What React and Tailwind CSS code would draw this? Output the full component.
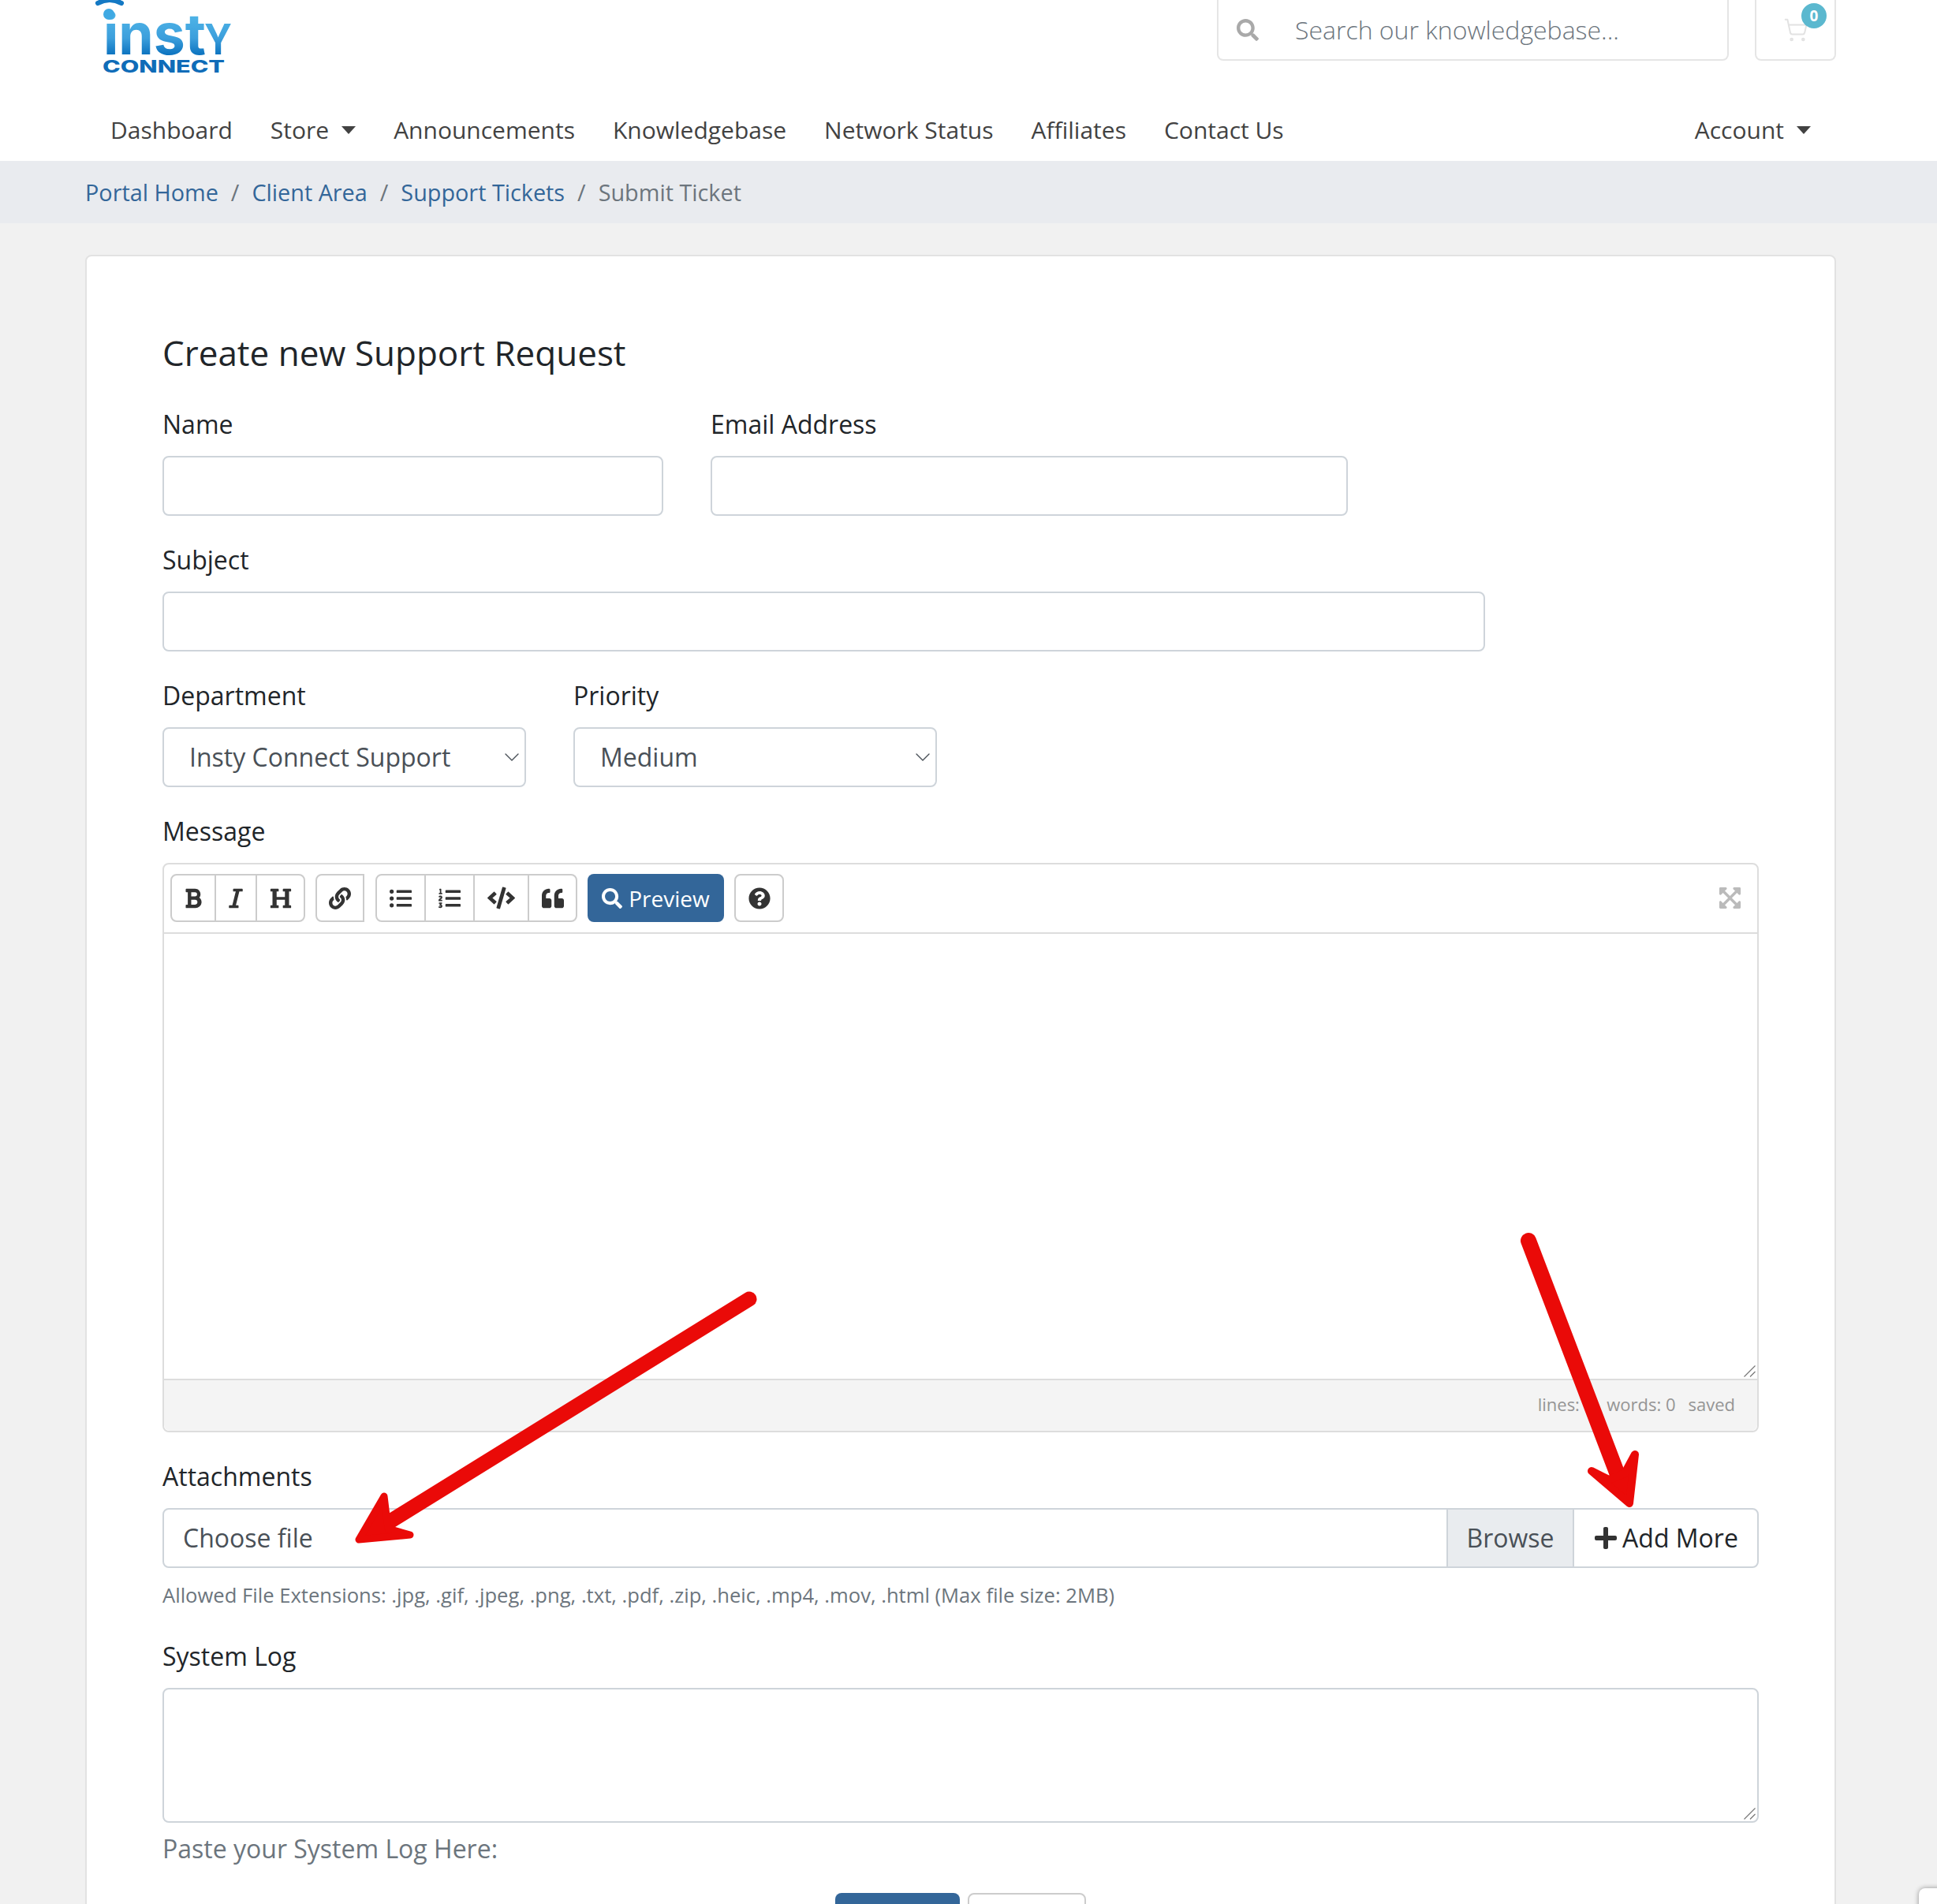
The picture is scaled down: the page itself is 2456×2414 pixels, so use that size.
import React from 'react';
import { ShoppingCart, ChevronDown } from 'lucide-react';
import {
  FaBold, FaItalic, FaHeading, FaLink, FaListUl, FaListOl, FaCode, FaQuoteLeft,
  FaSearch, FaQuestionCircle, FaExpandArrowsAlt, FaPlus,
} from 'react-icons/fa';

const navLinks = ['Dashboard', 'Store', 'Announcements', 'Knowledgebase', 'Network Status', 'Affiliates', 'Contact Us'];

function Caret() {
  return <span className="ml-[16px] inline-block border-x-[9px] border-t-[10px] border-x-transparent border-t-[#424242]" />;
}

function Logo() {
  return (
    <svg width="190" height="100" viewBox="120 0 190 100" className="block">
      <defs>
        <linearGradient id="instyFill" gradientUnits="userSpaceOnUse" x1="0" y1="22" x2="0" y2="70">
          <stop offset="0" stopColor="#4db2e6" />
          <stop offset="0.55" stopColor="#3c9fdc" />
          <stop offset="1" stopColor="#0b72bf" />
        </linearGradient>
      </defs>
      <path d="M124 4 Q139 -4 154 4" fill="none" stroke="#1479c4" strokeWidth="6" strokeLinecap="round" />
      <text x="131" y="69" fontFamily="Inter, sans-serif" fontWeight="700" fontSize="72" textLength="130" lengthAdjust="spacingAndGlyphs" fill="url(#instyFill)">inst</text>
      <text x="259" y="69" fontFamily="Inter, sans-serif" fontWeight="700" fontSize="54" textLength="35" lengthAdjust="spacingAndGlyphs" fill="url(#instyFill)">Y</text>
      <circle cx="138" cy="18" r="7" fill="#3fa9e3" />
      <text x="130" y="92" fontFamily="Inter, sans-serif" fontWeight="800" fontSize="21" textLength="155" lengthAdjust="spacingAndGlyphs" fill="#0f6cb8">CONNECT</text>
    </svg>
  );
}

function Header() {
  return (
    <header className="h-[204px] bg-white">
      <div className="flex h-[125px] justify-between pl-[120px] pr-[128px]">
        <Logo />
        <div className="flex h-[77px] gap-[33px]">
          <div className="flex w-[649px] items-center rounded-b-lg border-2 border-t-0 border-[#e5e5e5] pl-[23px]">
            <FaSearch className="text-[28px] text-[#a9a9a9]" />
            <input
              className="ml-[46px] w-[540px] bg-transparent font-light text-[32px] outline-none placeholder:text-[#6c757d]"
              placeholder="Search our knowledgebase..."
            />
          </div>
          <div className="relative flex w-[103px] items-center justify-center rounded-b-lg border-2 border-t-0 border-[#e5e5e5]">
            <ShoppingCart size={32} strokeWidth={1.5} className="text-[#e2e2e2]" />
            <span className="absolute right-[10px] top-[4px] flex h-[32px] w-[32px] items-center justify-center rounded-full bg-[#5bb8cf] text-[19px] font-bold text-white">0</span>
          </div>
        </div>
      </div>
      <nav className="flex h-[79px] items-center justify-between pl-[116px] pr-[32px] text-[30px] text-[#424242]">
        <div className="flex">
          {navLinks.map((link) => (
            <a key={link} className="flex items-center px-6">
              {link}
              {link === 'Store' && <Caret />}
            </a>
          ))}
        </div>
        <a className="flex items-center pr-[128px]">
          Account
          <Caret />
        </a>
      </nav>
    </header>
  );
}

function Breadcrumb() {
  const crumbs = ['Portal Home', 'Client Area', 'Support Tickets'];
  return (
    <div className="flex h-[79px] items-center bg-[#e9ebef] px-[108px] text-[28.8px]">
      {crumbs.map((c) => (
        <React.Fragment key={c}>
          <a className="text-[#336699]">{c}</a>
          <span className="px-4 text-[#6c757d]">/</span>
        </React.Fragment>
      ))}
      <span className="text-[#6c757d]">Submit Ticket</span>
    </div>
  );
}

function Label({ children }) {
  return <label className="mb-4 block text-[32px] leading-[48px] text-[#212529]">{children}</label>;
}

function TextInput({ className }) {
  return <input className={`block h-[76px] rounded-lg border-2 border-[#ced4da] bg-white px-6 outline-none ${className}`} />;
}

function Select({ value, className }) {
  return (
    <div className={`relative ${className}`}>
      <select className="block h-[76px] w-full appearance-none rounded-lg border-2 border-[#ced4da] bg-white pl-[32px] text-[32px] text-[#495057] outline-none">
        <option>{value}</option>
      </select>
      <ChevronDown size={32} strokeWidth={1} className="absolute right-[2px] top-[22px] text-[#495057]" />
    </div>
  );
}

function ResizeGrip({ className }) {
  return (
    <svg width="15" height="15" viewBox="0 0 15 15" className={`absolute ${className}`}>
      <path d="M0.5 14.5 L14.5 0.5 M8 14.5 L14.5 8" stroke="#777" strokeWidth="1.2" fill="none" />
    </svg>
  );
}

function ToolButton({ icon: Icon, className = '', iconClass = 'text-[28px]' }) {
  return (
    <button className={`flex h-full items-center justify-center ${className}`}>
      <Icon className={`text-[#333] ${iconClass}`} />
    </button>
  );
}

function Toolbar() {
  return (
    <div className="flex h-[88px] items-start justify-between border-b-2 border-[#ddd] pl-[8px] pr-[19px] pt-[12px]">
      <div className="flex h-[61px] gap-[13px]">
        <div className="flex rounded-lg border-2 border-[#ccc]">
          <ToolButton icon={FaBold} className="w-[54px]" />
          <ToolButton icon={FaItalic} className="w-[52px] border-l-2 border-[#ccc]" />
          <ToolButton icon={FaHeading} className="w-[61px] border-l-2 border-[#ccc]" />
        </div>
        <div className="flex w-[62px] rounded-l-lg border-2 border-[#ccc]">
          <ToolButton icon={FaLink} className="w-full" />
        </div>
        <div className="ml-px flex rounded-lg border-2 border-[#ccc]">
          <ToolButton icon={FaListUl} className="w-[60px]" />
          <ToolButton icon={FaListOl} className="w-[62px] border-l-2 border-[#ccc]" />
          <ToolButton icon={FaCode} iconClass="text-[35px]" className="w-[69px] border-l-2 border-[#ccc]" />
          <ToolButton icon={FaQuoteLeft} className="w-[61px] border-l-2 border-[#ccc]" />
        </div>
        <button className="flex w-[173px] items-center justify-center gap-[8px] rounded-lg bg-[#336699] text-[28px] text-white">
          <FaSearch className="text-[26px]" />
          Preview
        </button>
        <div className="flex w-[63px] rounded-lg border-2 border-[#ccc]">
          <ToolButton icon={FaQuestionCircle} className="w-full" />
        </div>
      </div>
      <FaExpandArrowsAlt className="mt-[15px] text-[31px] text-[#bbb]" />
    </div>
  );
}

function Editor() {
  return (
    <div className="rounded-lg border-2 border-[#ddd]">
      <Toolbar />
      <div className="relative">
        <textarea className="block h-[564px] w-full resize-none outline-none" />
        <ResizeGrip className="bottom-[2px] right-[2px]" />
      </div>
      <div className="flex h-[66px] items-center justify-end gap-[16px] rounded-b-lg border-t-2 border-[#ddd] bg-[#f4f4f4] pb-[3px] pr-[28px] text-[22px] text-[#959595]">
        <span>lines: 0</span>
        <span>words: 0</span>
        <span>saved</span>
      </div>
    </div>
  );
}

function Attachments() {
  return (
    <div className="flex h-[76px] rounded-lg border-2 border-[#ced4da] text-[32px]">
      <div className="flex flex-1 items-center pl-[24px] text-[#495057]">Choose file</div>
      <div className="flex w-[162px] items-center justify-center border-x-2 border-[#ced4da] bg-[#e9ecef] text-[#495057]">Browse</div>
      <button className="flex w-[232px] items-center justify-center gap-[5px] text-[#212529]">
        <FaPlus className="text-[32px] text-[#333]" />
        Add More
      </button>
    </div>
  );
}

function Arrows() {
  return (
    <svg width="2456" height="2414" viewBox="0 0 2456 2414" className="pointer-events-none absolute left-0 top-0">
      <line x1="950" y1="1647" x2="480" y2="1938" stroke="#ea0a08" strokeWidth="19" strokeLinecap="round" />
      <polygon points="487,1897 455,1952 520,1946 492,1938" fill="#ea0a08" stroke="#ea0a08" strokeWidth="9" strokeLinejoin="round" />
      <line x1="1938" y1="1573" x2="2055" y2="1880" stroke="#ea0a08" strokeWidth="20" strokeLinecap="round" />
      <polygon points="2073,1844 2066,1906 2018,1865 2040,1876 2060,1868" fill="#ea0a08" stroke="#ea0a08" strokeWidth="10" strokeLinejoin="round" />
    </svg>
  );
}

export default function App() {
  return (
    <div className="relative h-[2414px] overflow-hidden bg-[#f1f1f1] font-['Open_Sans',sans-serif]">
      <Header />
      <Breadcrumb />
      <main className="ml-[108px] mr-[128px] mt-[40px] h-[2200px] rounded-t-lg border-2 border-[#e2e2e2] bg-white px-[96px] pt-[96px]">
        <h2 className="mb-[40px] text-[44px] leading-[53px] text-[#212529]">Create new Support Request</h2>

        <div className="mb-8 flex gap-[60px]">
          <div>
            <Label>Name</Label>
            <TextInput className="w-[635px]" />
          </div>
          <div>
            <Label>Email Address</Label>
            <TextInput className="w-[808px]" />
          </div>
        </div>

        <div className="mb-8">
          <Label>Subject</Label>
          <TextInput className="w-[1677px]" />
        </div>

        <div className="mb-8 flex gap-[60px]">
          <div>
            <Label>Department</Label>
            <Select value="Insty Connect Support" className="w-[461px]" />
          </div>
          <div>
            <Label>Priority</Label>
            <Select value="Medium" className="w-[461px]" />
          </div>
        </div>

        <div className="mb-8">
          <Label>Message</Label>
          <Editor />
        </div>

        <div className="mb-[34px]">
          <Label>Attachments</Label>
          <Attachments />
          <p className="mt-[15px] text-[25.6px] leading-[39px] text-[#6c757d]">
            Allowed File Extensions: .jpg, .gif, .jpeg, .png, .txt, .pdf, .zip, .heic, .mp4, .mov, .html (Max file size: 2MB)
          </p>
        </div>

        <div>
          <Label>System Log</Label>
          <div className="relative">
            <textarea className="block h-[171px] w-full resize-none rounded-lg border-2 border-[#ced4da] outline-none" />
            <ResizeGrip className="bottom-[4px] right-[4px]" />
          </div>
          <p className="mt-[9px] text-[32px] leading-[48px] text-[#6c757d]">Paste your System Log Here:</p>
        </div>

        <div className="mt-[32px] flex justify-center gap-[10px] pr-[1px]">
          <button className="h-[76px] w-[158px] rounded-lg bg-[#336699]" />
          <button className="h-[76px] w-[150px] rounded-lg border-2 border-[#ccc] bg-white" />
        </div>
      </main>
      <div className="absolute left-[2433px] top-[2394px] h-[60px] w-[60px] rounded-tl-lg bg-white shadow-[0_0_6px_rgba(0,0,0,0.4)]" />
      <Arrows />
    </div>
  );
}
